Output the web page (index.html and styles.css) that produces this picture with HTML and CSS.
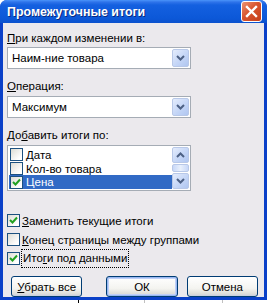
FILE: index.html
```html
<!DOCTYPE html>
<html>
<head>
<meta charset="utf-8">
<link rel="stylesheet" href="styles.css">
<title>Промежуточные итоги</title>
</head>
<body>

<!-- Dialog window -->
<div class="window">
  <div class="titlebar">
    <span class="title">Промежуточные итоги</span>
    <span class="close">
      <svg width="21" height="21" viewBox="0 0 21 21">
        <path d="M6 6 L15 15 M15 6 L6 15" stroke="#fff" stroke-width="2.4" stroke-linecap="square"/>
      </svg>
    </span>
  </div>

  <div class="client">
    <div class="label lbl-first"><u>П</u>ри каждом изменении в:</div>
    <div class="combo">
      <span class="combo-text">Наим-ние товара</span>
      <span class="arrow-btn">
        <svg width="9" height="6" viewBox="0 0 9 6"><path d="M1 1 L4.5 4.5 L8 1" stroke="#4d6185" stroke-width="2" fill="none"/></svg>
      </span>
    </div>

    <div class="label"><u>О</u>перация:</div>
    <div class="combo">
      <span class="combo-text">Максимум</span>
      <span class="arrow-btn">
        <svg width="9" height="6" viewBox="0 0 9 6"><path d="M1 1 L4.5 4.5 L8 1" stroke="#4d6185" stroke-width="2" fill="none"/></svg>
      </span>
    </div>

    <div class="label">До<u>б</u>авить итоги по:</div>
    <div class="listbox">
      <div class="items">
        <div class="item"><span class="cb"></span><span>Дата</span></div>
        <div class="item"><span class="cb"></span><span>Кол-во товара</span></div>
        <div class="item selected"><span class="cb"><svg width="11" height="11" viewBox="0 0 11 11"><path d="M2 5 L4.5 7.5 L9 2.5" stroke="#21a121" stroke-width="2" fill="none"/></svg></span><span>Цена</span></div>
      </div>
      <div class="scrollbar">
        <span class="sb-btn">
          <svg width="9" height="6" viewBox="0 0 9 6"><path d="M1 5 L4.5 1.5 L8 5" stroke="#4d6185" stroke-width="2" fill="none"/></svg>
        </span>
        <span class="sb-thumb"></span>
        <span class="sb-btn">
          <svg width="9" height="6" viewBox="0 0 9 6"><path d="M1 1 L4.5 4.5 L8 1" stroke="#4d6185" stroke-width="2" fill="none"/></svg>
        </span>
      </div>
    </div>

    <div class="checks">
      <div class="check"><span class="cb"><svg width="11" height="11" viewBox="0 0 11 11"><path d="M2 5 L4.5 7.5 L9 2.5" stroke="#21a121" stroke-width="2" fill="none"/></svg></span><span><u>З</u>аменить текущие итоги</span></div>
      <div class="check"><span class="cb"></span><span><u>К</u>онец страницы между группами</span></div>
      <div class="check"><span class="cb"><svg width="11" height="11" viewBox="0 0 11 11"><path d="M2 5 L4.5 7.5 L9 2.5" stroke="#21a121" stroke-width="2" fill="none"/></svg></span><span class="focus">Ито<u>г</u>и под данными</span></div>
    </div>

    <div class="buttons">
      <span class="btn btn-clear"><span><u>У</u>брать все</span></span>
      <span class="btn btn-ok">ОК</span>
      <span class="btn btn-cancel">Отмена</span>
    </div>
  </div>
</div>

<!-- worksheet behind the dialog -->
<div class="sheet">
  <span class="grid-mark dark"></span>
  <span class="grid-mark"></span>
  <span class="grid-mark"></span>
</div>

</body>
</html>
```

FILE: styles.css
```css
* {
  box-sizing: border-box;
}

body {
  margin: 0;
  background-color: #ffffff;
  font-family: "Liberation Sans", sans-serif;
  font-size: 11.5px;
  color: #000000;
}

u {
  text-decoration: underline;
  text-underline-offset: 1px;
}

.window {
  width: 267px;
  height: 300px;
  display: flex;
  flex-direction: column;
  background-color: #0a40c8;
  border-radius: 7px 7px 0 0;
  padding: 0 3px 3px 3px;
}

/* title bar */
.titlebar {
  height: 29px;
  margin: 0 -3px;
  padding: 0 5px 0 7px;
  display: flex;
  align-items: center;
  justify-content: space-between;
  border-radius: 7px 7px 0 0;
  background: linear-gradient(#4a94fa 0px, #2f74ea 2px, #1460e0 5px, #0c58d8 18px, #0b50ca 25px, #0a46bc 29px);
}

.title {
  color: #ffffff;
  font-family: "Liberation Sans", sans-serif;
  font-weight: bold;
  font-size: 12.4px;
  text-shadow: 1px 1px 0 #0a2a80;
  padding-top: 1px;
}

.close {
  width: 21px;
  height: 21px;
  border: 1px solid #ffffff;
  border-radius: 3px;
  background: linear-gradient(135deg, #eb9474, #d8542e 45%, #c4401c);
  display: flex;
  align-items: center;
  justify-content: center;
}

.close svg {
  display: block;
  margin: -1px;
}

.client {
  flex: 1;
  background-color: #ebe9ed;
  padding: 0 6px 0 4px;
  display: flex;
  flex-direction: column;
}

.label {
  height: 13px;
  line-height: 13px;
  margin-top: 11px;
  margin-bottom: 3px;
  white-space: nowrap;
}

.lbl-first {
  margin-top: 9px;
  margin-bottom: 2px;
}

/* combo boxes */
.combo {
  width: 184px;
  height: 22px;
  border: 1px solid #a5acb5;
  background-color: #ffffff;
  display: flex;
  align-items: center;
  justify-content: space-between;
  padding: 1px 1px 1px 4px;
}

.arrow-btn,
.sb-btn {
  width: 17px;
  height: 18px;
  border: 1px solid #b8c8e8;
  border-radius: 2px;
  background: linear-gradient(135deg, #e4ecfc, #c2d4f6 60%, #b0c6f0);
  display: flex;
  align-items: center;
  justify-content: center;
}

/* list box */
.listbox {
  width: 184px;
  height: 46px;
  border: 1px solid #a5acb5;
  background-color: #ffffff;
  display: flex;
  padding: 1px;
}

.items {
  flex: 1;
  display: flex;
  flex-direction: column;
  padding-top: 1px;
}

.item {
  height: 14px;
  display: flex;
  align-items: center;
  padding-left: 1px;
  gap: 3px;
}

.item.selected {
  background-color: #316ac5;
  color: #ffffff;
}

.scrollbar {
  width: 17px;
  display: flex;
  flex-direction: column;
  gap: 1px;
}

.sb-btn {
  height: 16px;
}

.sb-thumb {
  flex: 1;
  border: 1px solid #b8c8e8;
  border-radius: 2px;
  background: linear-gradient(90deg, #c8d8f8, #e8f0fc 50%, #c8d8f8);
}

/* check boxes */
.cb {
  width: 13px;
  height: 13px;
  flex: none;
  border: 1px solid #1c5180;
  background: linear-gradient(135deg, #dcdcd4, #ffffff 80%);
  display: flex;
  align-items: center;
  justify-content: center;
}

.checks {
  margin-top: 23px;
  display: flex;
  flex-direction: column;
  gap: 6px;
}

.check {
  height: 13px;
  display: flex;
  align-items: center;
  gap: 2px;
  white-space: nowrap;
}

.focus {
  outline: 1px dotted #000000;
  padding: 2px 1px 3px 1px;
}

/* buttons */
.buttons {
  margin-top: 11px;
  display: flex;
}

.btn {
  width: 73px;
  height: 21px;
  border: 1px solid #003c74;
  border-radius: 3px;
  background: linear-gradient(#ffffff, #f4f4f0 60%, #dcdcd8 90%, #c4cce0);
  display: flex;
  align-items: center;
  justify-content: center;
}

.btn-clear {
  margin-left: 4px;
}

.btn-ok {
  margin-left: 24px;
  box-shadow: inset 0 0 0 1px #98b8f0, inset 0 0 0 2px #c0d0f8;
}

.btn-cancel {
  margin-left: 9px;
}

/* sheet grid below the dialog */
.sheet {
  height: 3px;
  display: flex;
}

.grid-mark {
  width: 1px;
  height: 3px;
  background-color: #c0c0c0;
}

.grid-mark.dark {
  background-color: #000000;
  margin-left: 78px;
}

.grid-mark + .grid-mark {
  margin-left: 65px;
}

.grid-mark + .grid-mark + .grid-mark {
  margin-left: 77px;
}
```
